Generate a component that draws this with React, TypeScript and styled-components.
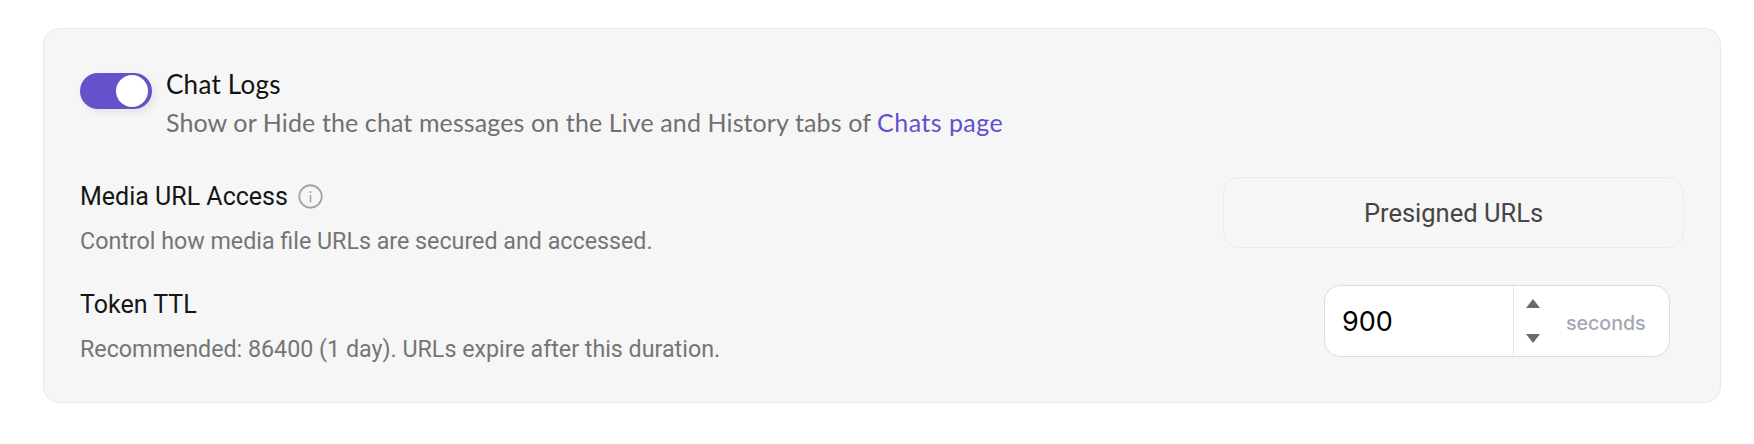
import styled, { createGlobalStyle } from 'styled-components';

const GlobalStyle = createGlobalStyle`
  html, body {
    margin: 0;
    padding: 0;
    background: #fff;
  }
`;

const App = () => {
  return (
    <>
      <GlobalStyle />
      <Card>
        <ToggleRow>
          <Toggle>
            <Knob />
          </Toggle>
          <div>
            <ToggleTitle>Chat Logs</ToggleTitle>
            <ToggleHint>
              Show or Hide the chat messages on the Live and History tabs of <ChatsLink>Chats page</ChatsLink>
            </ToggleHint>
          </div>
        </ToggleRow>
        <SettingRow>
          <SettingText>
            <SettingTitle>
              Media URL Access
              <InfoIcon viewBox="0 0 24 24" fill="none">
                <circle cx="12" cy="12" r="10.8" stroke="#a3a3a3" strokeWidth="1.7" />
                <circle cx="12" cy="7.6" r="1" fill="#a3a3a3" />
                <path d="M12 11v6" stroke="#a3a3a3" strokeWidth="1.5" strokeLinecap="round" />
              </InfoIcon>
            </SettingTitle>
            <SettingHint>Control how media file URLs are secured and accessed.</SettingHint>
          </SettingText>
          <ModeBox>Presigned URLs</ModeBox>
        </SettingRow>
        <SettingRow>
          <SettingText>
            <SettingTitle>Token TTL</SettingTitle>
            <SettingHint>Recommended: 86400 (1 day). URLs expire after this duration.</SettingHint>
          </SettingText>
          <NumberField>
            <NumberValue>900</NumberValue>
            <Stepper>
              <Arrow viewBox="0 0 14 9">
                <path d="M7 0l7 9H0z" fill="#6b6b6b" />
              </Arrow>
              <Arrow viewBox="0 0 14 9">
                <path d="M0 0h14L7 9z" fill="#6b6b6b" />
              </Arrow>
            </Stepper>
            <Unit>seconds</Unit>
          </NumberField>
        </SettingRow>
      </Card>
    </>
  );
};

const Card = styled.section`
  box-sizing: border-box;
  margin: 28px 0 0 43px;
  width: 1678px;
  height: 375px;
  padding: 44px 36px 0 36px;
  background: #f6f6f6;
  border: 1px solid #e9e9e9;
  border-radius: 16px;
  font-family: 'Lato', sans-serif;
`;

const ToggleRow = styled.div`
  display: flex;
  gap: 14px;
  height: 104px;
`;

const Toggle = styled.div`
  box-sizing: border-box;
  width: 72px;
  height: 36px;
  padding: 2px 4px;
  display: flex;
  justify-content: flex-end;
  border-radius: 18px;
  background: #6352c9;
  box-shadow: 3px 4px 8px rgba(0, 0, 0, 0.07);
`;

const Knob = styled.div`
  width: 32px;
  height: 32px;
  border-radius: 50%;
  background: #fff;
`;

const ToggleTitle = styled.div`
  font-size: 26px;
  line-height: 30px;
  letter-spacing: 0.25px;
  color: #111;
  margin: -4px 0 8px;
`;

const ToggleHint = styled.div`
  font-size: 25px;
  line-height: 30px;
  letter-spacing: 0.11px;
  color: #707070;
`;

const ChatsLink = styled.span`
  color: #5f50cf;
  letter-spacing: 0.45px;
`;

const SettingRow = styled.div`
  display: flex;
  justify-content: space-between;
  align-items: flex-start;
  height: 108px;
`;

const SettingText = styled.div`
  padding-top: 4px;
`;

const SettingTitle = styled.div`
  display: flex;
  align-items: center;
  gap: 10px;
  height: 30px;
  font-family: 'Roboto', sans-serif;
  font-size: 25px;
  font-weight: 450;
  color: #161616;
  margin-bottom: 15px;
`;

const InfoIcon = styled.svg`
  width: 25px;
  height: 25px;
`;

const SettingHint = styled.div`
  font-family: 'Roboto', sans-serif;
  font-size: 23.25px;
  line-height: 30px;
  color: #757575;
`;

const ModeBox = styled.div`
  box-sizing: border-box;
  width: 461px;
  height: 71px;
  display: flex;
  align-items: center;
  justify-content: center;
  border: 1px solid #ebebeb;
  border-radius: 16px;
  font-family: 'Roboto', sans-serif;
  font-size: 25.5px;
  font-weight: 450;
  color: #454545;
`;

const NumberField = styled.div`
  box-sizing: border-box;
  width: 346px;
  height: 72px;
  margin-right: 14px;
  display: flex;
  align-items: stretch;
  background: #fff;
  border: 1px solid #dcdcdc;
  border-radius: 16px;
`;

const NumberValue = styled.div`
  width: 189px;
  padding-left: 17px;
  box-sizing: border-box;
  display: flex;
  align-items: center;
  font-family: 'Inter', sans-serif;
  font-size: 27px;
  color: #000;
  border-right: 1px solid #e6e6e6;
`;

const Stepper = styled.div`
  display: flex;
  flex-direction: column;
  justify-content: space-between;
  padding: 13px 0 13px 12px;
`;

const Arrow = styled.svg`
  display: block;
  width: 14px;
  height: 9px;
`;

const Unit = styled.div`
  margin-left: 26px;
  padding-top: 3px;
  display: flex;
  align-items: center;
  font-family: 'Inter', sans-serif;
  font-size: 19.6px;
  font-weight: 500;
  color: #a3a7b3;
`;

export default App;
